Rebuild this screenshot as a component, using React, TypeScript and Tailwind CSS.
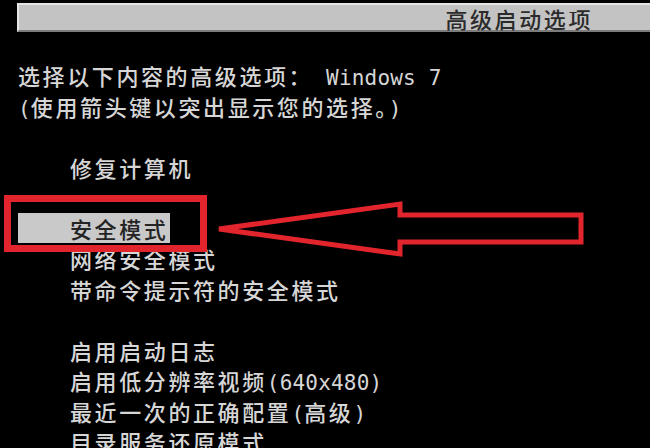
import React from "react";

const cjk = '"Noto Sans CJK SC", "Noto Sans", sans-serif';

// split a line into CJK runs and ASCII runs; ASCII goes into the mono face
function Runs({ text }: { text: string }) {
  const parts = text.split(/([\x00-\x7f]+)/).filter(Boolean);
  return (
    <>
      {parts.map((p, i) =>
        /^[\x00-\x7f]+$/.test(p) ? (
          <span
            key={i}
            className="whitespace-pre font-['DejaVu_Sans_Mono',monospace] text-[21px] tracking-[0.2px]"
          >
            {p}
          </span>
        ) : (
          <span key={i} className="text-[22px] font-medium tracking-[2.6px]">
            {p}
          </span>
        )
      )}
    </>
  );
}

function Row({ text, indent = true }: { text?: string; indent?: boolean }) {
  return (
    <div className={`h-[30.5px] leading-[30.5px] whitespace-nowrap ${indent ? "pl-[52px]" : ""}`}>
      {text ? <Runs text={text} /> : null}
    </div>
  );
}

export default function App() {
  return (
    <div
      className="relative h-[448px] w-[650px] overflow-hidden bg-black text-[#d6d6d6]"
      style={{ fontFamily: cjk }}
    >
      {/* title bar */}
      <div className="ml-[17px] mt-[3px] flex h-[29px] items-center justify-end border-l-2 border-t-2 border-b-2 border-l-[#e4e4e4] border-t-[#e4e4e4] border-b-[#7c7c7c] bg-[#c3c3c3] pr-[57px] text-[#2b2b2b]">
        <span className="text-[22px] font-medium leading-none tracking-[2.6px]">高级启动选项</span>
      </div>

      <div className="mt-[28px] pl-[18px]">
        <Row indent={false} text="选择以下内容的高级选项： Windows 7" />
        <Row indent={false} text="(使用箭头键以突出显示您的选择。)" />
        <Row />
        <Row text="修复计算机" />
        <Row />
        <div className="h-[30.5px] w-[152px] whitespace-nowrap bg-[#c9c9c9] pl-[52px] leading-[30.5px] text-[#242424]">
          <Runs text="安全模式" />
        </div>
        <Row text="网络安全模式" />
        <Row text="带命令提示符的安全模式" />
        <Row />
        <Row text="启用启动日志" />
        <Row text="启用低分辨率视频(640x480)" />
        <Row text="最近一次的正确配置(高级)" />
        <Row text="目录服务还原模式" />
      </div>

      {/* red annotation: box + arrow */}
      <svg
        className="pointer-events-none absolute left-0 top-0"
        width="650"
        height="448"
        viewBox="0 0 650 448"
      >
        <rect x="7.5" y="198.5" width="196" height="50" fill="none" stroke="#e2242c" strokeWidth="7" />
        <polygon
          points="219,229 400,204 400,215 581,215 581,242 400,242 400,254"
          fill="none"
          stroke="#e2242c"
          strokeWidth="5"
          strokeLinejoin="miter"
        />
      </svg>
    </div>
  );
}
